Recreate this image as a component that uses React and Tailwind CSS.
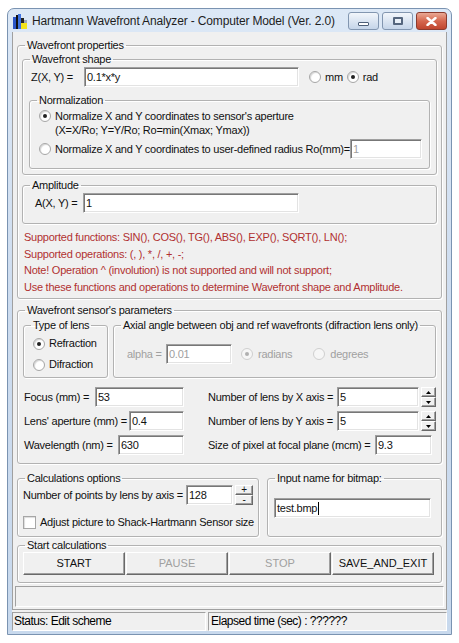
import clsx from "clsx";

// ─── Small Win32-style controls ───────────────────────────────────────────────

function Group({ title, className, children }) {
  return (
    <fieldset
      className={clsx(
        "min-w-0 rounded-[3px] border border-[#b2b2b2] shadow-[inset_1px_1px_0_#fff,1px_1px_0_#fff]",
        className
      )}
    >
      <legend className="ml-[7px] px-[2px] leading-[13px] whitespace-nowrap">
        {title}
      </legend>
      {children}
    </fieldset>
  );
}

function Field({ value, className, disabled, caret }) {
  return (
    <div
      className={clsx(
        "flex h-[20px] items-center border border-t-[#a0a0a0] border-l-[#a0a0a0] border-b-white border-r-white bg-white pl-[2px] shadow-[inset_1px_1px_0_#777,inset_-1px_-1px_0_#e3e3e3] whitespace-nowrap",
        disabled && "text-[#a0a0a0]",
        className
      )}
    >
      {value}
      {caret && <span className="ml-[1px] h-[13px] w-px bg-black" />}
    </div>
  );
}

function Radio({ checked, disabled, className }) {
  return (
    <span
      className={clsx(
        "inline-flex h-[12px] w-[12px] shrink-0 items-center justify-center rounded-full border",
        disabled
          ? "border-[#cfcfcf] bg-[#f6f6f6]"
          : "border-[#a6a6a6] bg-white shadow-[inset_1px_1px_1px_#d6d6d6]",
        className
      )}
    >
      {checked && (
        <span
          className={clsx(
            "h-[4px] w-[4px] rounded-full",
            disabled ? "bg-[#b0b0b0]" : "bg-[#222]"
          )}
        />
      )}
    </span>
  );
}

function Raised({ className, children }) {
  return (
    <div
      className={clsx(
        "flex items-center justify-center border border-t-white border-l-white border-b-[#696969] border-r-[#696969] bg-[#f0f0f0] shadow-[inset_-1px_-1px_0_#a0a0a0]",
        className
      )}
    >
      {children}
    </div>
  );
}

function Arrow({ down }) {
  return (
    <svg width="5" height="3" viewBox="0 0 5 3">
      <path d={down ? "M0 0H5L2.5 3Z" : "M0 3H5L2.5 0Z"} fill="#000" />
    </svg>
  );
}

function Spinner() {
  return (
    <div className="ml-[2px] flex h-[20px] w-[15px] flex-col">
      <Raised className="h-[10px]">
        <Arrow />
      </Raised>
      <Raised className="h-[10px]">
        <Arrow down />
      </Raised>
    </div>
  );
}

function PlusMinus() {
  return (
    <div className="ml-[2px] flex h-[20px] w-[18px] flex-col text-[10px] leading-none">
      <Raised className="h-[10px]">+</Raised>
      <Raised className="h-[10px]">-</Raised>
    </div>
  );
}

function AppIcon() {
  return (
    <svg width="15" height="16" viewBox="0 0 15 16">
      <rect x="0" y="3" width="3" height="12" fill="#2a55c8" />
      <rect x="3" y="1" width="2" height="14" fill="#111" />
      <rect x="5" y="0" width="3" height="15" fill="#3f72e0" />
      <rect x="8" y="4" width="3" height="11" fill="#222" />
      <rect x="8" y="9" width="6" height="6" fill="#f3e31a" />
      <rect x="11" y="6" width="3" height="3" fill="#9aa4b4" />
    </svg>
  );
}

// ─── Title bar ────────────────────────────────────────────────────────────────

function TitleBar() {
  return (
    <div className="flex h-[23px] shrink-0 items-start">
      <div className="ml-[1px] mt-[5px]">
        <AppIcon />
      </div>
      <span className="ml-[4px] mt-[4px] font-['Liberation_Sans',Arial,sans-serif] text-[12px] leading-[16px] tracking-[-0.15px] text-[#1e1e1e] whitespace-nowrap">
        Hartmann Wavefront Analyzer - Computer Model (Ver. 2.0)
      </span>
      <div className="ml-auto mt-[3px] flex gap-[3px]">
        <div className="flex h-[18px] w-[31px] items-center justify-center rounded-[3px] border border-[#8296b0] bg-gradient-to-b from-[#f2f6fb] to-[#c5d5e9]">
          <span className="mt-[5px] h-[4px] w-[11px] rounded-[1px] border border-[#4d5f78] bg-white" />
        </div>
        <div className="flex h-[18px] w-[31px] items-center justify-center rounded-[3px] border border-[#8296b0] bg-gradient-to-b from-[#f2f6fb] to-[#c5d5e9]">
          <span className="h-[8px] w-[10px] rounded-[1px] border-2 border-[#55667e] bg-[#e9f0f8]" />
        </div>
        <div className="flex h-[18px] w-[31px] items-center justify-center rounded-[3px] border border-[#8b3b2e] bg-gradient-to-b from-[#e9a894] via-[#d5674f] to-[#c0462f]">
          <svg width="11" height="9" viewBox="0 0 11 9">
            <path
              d="M1.5 1L9.5 8M9.5 1L1.5 8"
              stroke="#fff"
              strokeWidth="2.4"
              strokeLinecap="round"
            />
          </svg>
        </div>
      </div>
    </div>
  );
}

// ─── Form sections ────────────────────────────────────────────────────────────

function WavefrontProperties() {
  return (
    <Group title="Wavefront properties" className="mx-[4px] mt-[7px] h-[260px]">
      <Group title="Wavefront shape" className="mx-[4px] mt-[1px] h-[122px]">
        <div className="mt-[1px] flex h-[20px] items-center pl-[8px]">
          <span className="w-[53px] whitespace-nowrap">Z(X, Y) =</span>
          <Field value="0.1*x*y" className="w-[215px]" />
          <Radio className="ml-[10px]" />
          <span className="ml-[4px]">mm</span>
          <Radio checked className="ml-[4px]" />
          <span className="ml-[4px]">rad</span>
        </div>

        <Group title="Normalization" className="mx-[6px] mt-[7px] h-[75px]">
          <div className="mt-[2px] flex h-[14px] items-center pl-[9px]">
            <Radio checked />
            <span className="ml-[4px] whitespace-nowrap">
              Normalize X and Y coordinates to sensor's aperture
            </span>
          </div>
          <div className="flex h-[15px] items-center pl-[25px] whitespace-nowrap">
            (X=X/Ro; Y=Y/Ro; Ro=min(Xmax; Ymax))
          </div>
          <div className="mt-[1px] flex h-[20px] items-center pl-[9px]">
            <Radio />
            <span className="ml-[4px] whitespace-nowrap">
              Normalize X and Y coordinates to user-defined radius Ro(mm)=
            </span>
            <Field value="1" disabled className="ml-auto mr-[7px] w-[72px]" />
          </div>
        </Group>
      </Group>

      <Group title="Amplitude" className="mx-[4px] mt-[4px] h-[45px]">
        <div className="mt-[1px] flex h-[20px] items-center pl-[12px]">
          <span className="w-[48px] whitespace-nowrap">A(X, Y) =</span>
          <Field value="1" className="w-[216px]" />
        </div>
      </Group>

      <div className="mt-[5px] pl-[6px] leading-[16.5px] text-[#b03030] whitespace-nowrap">
        <p>Supported functions: SIN(), COS(), TG(), ABS(), EXP(), SQRT(), LN();</p>
        <p>Supported operations: (, ), *, /, +, -;</p>
        <p>Note! Operation ^ (involution) is not supported and will not support;</p>
        <p>Use these functions and operations to determine Wavefront shape and Amplitude.</p>
      </div>
    </Group>
  );
}

function ParamRow({ label, value, width }) {
  return (
    <div className="flex h-[20px] w-[160px] items-center justify-between">
      <span className="whitespace-nowrap">{label}</span>
      <Field value={value} className={width} />
    </div>
  );
}

function SensorParameters() {
  return (
    <Group
      title="Wavefront sensor's parameters"
      className="mx-[4px] mt-[5px] h-[160px]"
    >
      <div className="mt-[2px] flex">
        <Group title="Type of lens" className="ml-[5px] h-[59px] w-[85px]">
          <div className="mt-[1px] flex h-[21px] items-center pl-[9px]">
            <Radio checked />
            <span className="ml-[4px]">Refraction</span>
          </div>
          <div className="flex h-[21px] items-center pl-[9px]">
            <Radio />
            <span className="ml-[4px]">Difraction</span>
          </div>
        </Group>

        <Group
          title="Axial angle between obj and ref wavefronts (difraction lens only)"
          className="ml-[5px] h-[59px] w-[323px]"
        >
          <div className="mt-[12px] flex h-[20px] items-center pl-[13px] text-[#a0a0a0]">
            <span className="w-[39px] whitespace-nowrap">alpha =</span>
            <Field value="0.01" disabled className="w-[66px]" />
            <Radio checked disabled className="ml-[9px]" />
            <span className="ml-[5px]">radians</span>
            <Radio disabled className="ml-[21px]" />
            <span className="ml-[5px]">degrees</span>
          </div>
        </Group>
      </div>

      <div className="mt-[9px] flex flex-col gap-[4px] pl-[6px]">
        <div className="flex items-center">
          <ParamRow label="Focus (mm) =" value="53" width="w-[89px]" />
          <span className="ml-[24px] w-[129px] whitespace-nowrap">
            Number of lens by X axis =
          </span>
          <Field value="5" className="w-[82px]" />
          <Spinner />
        </div>
        <div className="flex items-center">
          <ParamRow label="Lens' aperture (mm) =" value="0.4" width="w-[55px]" />
          <span className="ml-[24px] w-[129px] whitespace-nowrap">
            Number of lens by Y axis =
          </span>
          <Field value="5" className="w-[82px]" />
          <Spinner />
        </div>
        <div className="flex items-center">
          <ParamRow label="Wavelength (nm) =" value="630" width="w-[66px]" />
          <span className="ml-[24px] w-[167px] whitespace-nowrap">
            Size of pixel at focal plane (mcm) =
          </span>
          <Field value="9.3" className="w-[57px]" />
        </div>
      </div>
    </Group>
  );
}

function CalculationRow() {
  return (
    <div className="mx-[4px] mt-[8px] flex gap-[8px]">
      <Group title="Calculations options" className="h-[65px] w-[242px]">
        <div className="flex h-[20px] items-center pl-[5px]">
          <span className="w-[163px] whitespace-nowrap">
            Number of points by lens by axis =
          </span>
          <Field value="128" className="w-[47px]" />
          <PlusMinus />
        </div>
        <div className="mt-[10px] flex h-[14px] items-center pl-[5px]">
          <span className="h-[13px] w-[13px] shrink-0 border border-[#a6a6a6] bg-white shadow-[inset_1px_1px_1px_#dcdcdc]" />
          <span className="ml-[4px] whitespace-nowrap">
            Adjust picture to Shack-Hartmann Sensor size
          </span>
        </div>
      </Group>

      <Group title="Input name for bitmap:" className="h-[65px] w-[175px]">
        <div className="mt-[13px] pl-[6px]">
          <Field value="test.bmp" caret className="w-[157px]" />
        </div>
      </Group>
    </div>
  );
}

function StartCalculations() {
  const buttons = [
    { label: "START", off: false },
    { label: "PAUSE", off: true },
    { label: "STOP", off: true },
    { label: "SAVE_AND_EXIT", off: false },
  ];
  return (
    <Group title="Start calculations" className="mx-[4px] mt-[2px] h-[44px]">
      <div className="flex gap-[1px] pl-[5px]">
        {buttons.map((b) => (
          <Raised
            key={b.label}
            className={clsx(
              "h-[23px] w-[102px] tracking-normal",
              b.off && "text-[#a0a0a0]"
            )}
          >
            {b.label}
          </Raised>
        ))}
      </div>
    </Group>
  );
}

// ─── Page ─────────────────────────────────────────────────────────────────────

export default function App() {
  return (
    <div className="h-[643px] w-[459px] overflow-hidden bg-white pl-[7px] pt-[8px]">
      <div className="flex h-[627px] w-[445px] flex-col rounded-t-[7px] border border-[#7a93b1] bg-gradient-to-b from-[#dce8f6] via-[#cddcef] to-[#c8d9ed] px-[4px] pb-[3px]">
        <TitleBar />

        <div className="flex flex-1 flex-col bg-[#f0f0f0]">
          <div className="flex flex-col border-x border-b border-[#a0a0a0] font-['Liberation_Sans',Arial,sans-serif] text-[11px] tracking-[-0.25px] text-[#111]">
            <WavefrontProperties />
            <SensorParameters />
            <CalculationRow />
            <StartCalculations />
            <div className="mx-[2px] mb-[2px] mt-[3px] h-[21px] border border-t-[#a0a0a0] border-l-[#a0a0a0] border-b-white border-r-white" />
          </div>

          <div className="mt-[2px] flex h-[19px] gap-[2px] font-['Liberation_Sans',Arial,sans-serif] text-[12px] leading-[17px] tracking-[-0.5px] text-black">
            <div className="w-[194px] border border-t-[#a0a0a0] border-l-[#a0a0a0] border-b-white border-r-white pl-[1px] whitespace-nowrap">
              Status: Edit scheme
            </div>
            <div className="flex-1 border border-t-[#a0a0a0] border-l-[#a0a0a0] border-b-white border-r-white pl-[2px] whitespace-nowrap">
              Elapsed time (sec) : ??????
            </div>
          </div>
        </div>
      </div>
    </div>
  );
}
